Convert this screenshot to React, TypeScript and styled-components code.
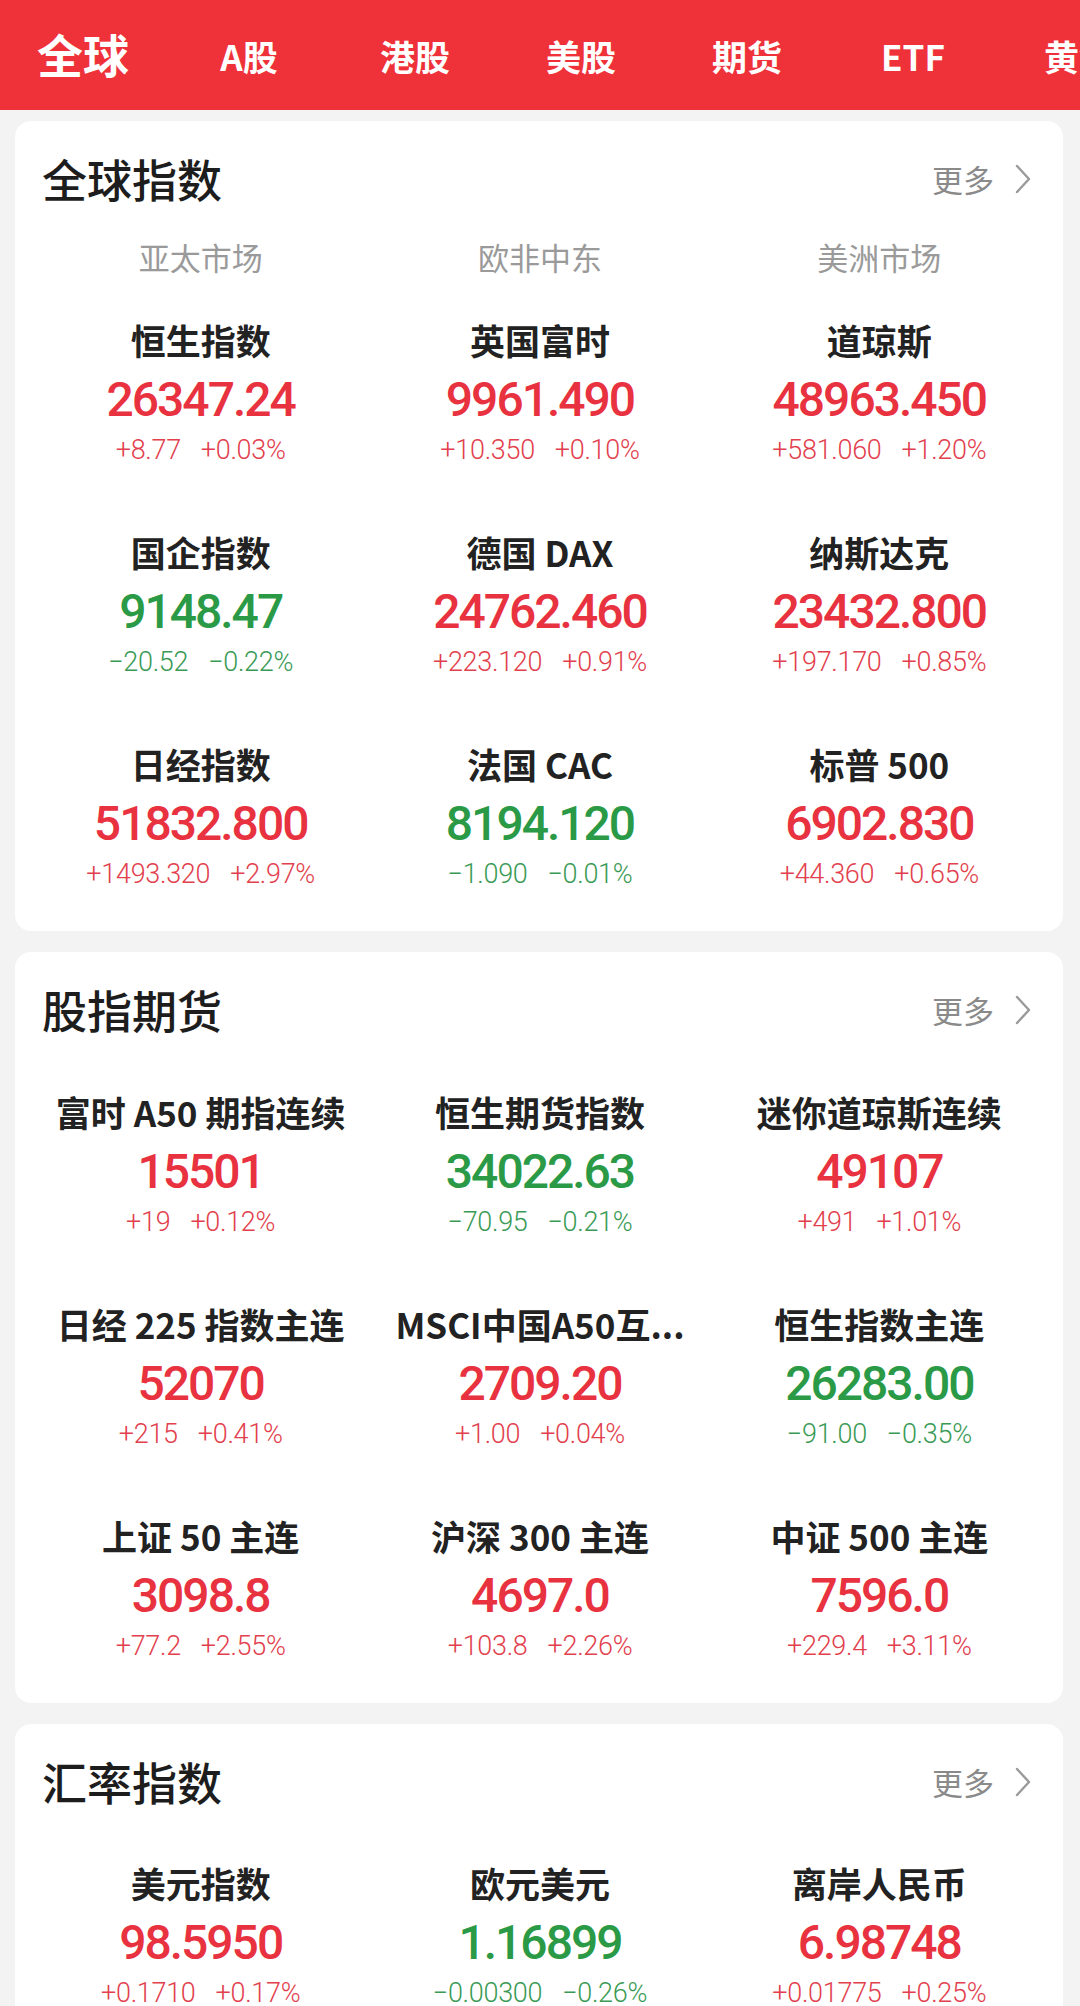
import React from "react";
import styled, { createGlobalStyle } from "styled-components";

type Dir = "up" | "down";

type Quote = {
  name: string;
  price: string;
  delta: string;
  pct: string;
  dir: Dir;
};

type Section = {
  title: string;
  regions?: string[];
  gridTop: number;
  quotes: Quote[];
};

const RED = "#e8323f";
const GREEN = "#2b9a47";

const GlobalStyle = createGlobalStyle`
  html, body {
    margin: 0;
    padding: 0;
    background: #f3f3f3;
    font-family: "Noto Sans CJK SC", "Noto Sans", sans-serif;
  }
`;

const Page = styled.div`
  width: 1080px;
  height: 2006px;
  overflow: hidden;
  background: #f3f3f3;
`;

const TopBar = styled.div`
  height: 110px;
  display: flex;
  align-items: center;
  background: #ef313a;
  overflow: hidden;
`;

const Tab = styled.div<{ $active?: boolean }>`
  flex: 0 0 166px;
  text-align: center;
  color: #fff;
  white-space: nowrap;
  font-size: ${(p) => (p.$active ? 46 : 35)}px;
  font-weight: 700;
  line-height: 50px;
  margin-top: ${(p) => (p.$active ? -4 : 2)}px;
`;

const Feed = styled.div`
  display: flex;
  flex-direction: column;
  gap: 21px;
  padding: 11px 17px 0 15px;
`;

const Card = styled.div`
  background: #fff;
  border-radius: 16px;
  padding: 0 14px 39px 16px;
`;

const CardHeader = styled.div`
  display: flex;
  align-items: center;
  justify-content: space-between;
  height: 44px;
  padding: 36px 17px 0 11px;
`;

const Title = styled.div`
  font-size: 45px;
  font-weight: 500;
  color: #1d1d1d;
  line-height: 44px;
`;

const More = styled.div`
  display: flex;
  align-items: center;
  gap: 20px;
  font-size: 31px;
  color: #8a8a8a;
  line-height: 44px;
`;

const Regions = styled.div`
  display: grid;
  grid-template-columns: repeat(3, 1fr);
  margin-top: 36px;
  line-height: 40px;
  font-size: 31px;
  color: #9a9a9a;
  text-align: center;
`;

const Grid = styled.div<{ $top: number }>`
  display: grid;
  grid-template-columns: repeat(3, 1fr);
  row-gap: 62px;
  margin-top: ${(p) => p.$top}px;
`;

const Cell = styled.div`
  display: flex;
  flex-direction: column;
  align-items: center;
  min-width: 0;
`;

const Name = styled.div`
  font-size: 35px;
  font-weight: 700;
  line-height: 44px;
  color: #222;
  white-space: nowrap;
`;

const Price = styled.div<{ $dir: Dir }>`
  margin-top: 10px;
  font-family: Roboto, "Liberation Sans", sans-serif;
  font-size: 48px;
  font-weight: 500;
  line-height: 56px;
  letter-spacing: -2px;
  color: ${(p) => (p.$dir === "up" ? RED : GREEN)};
`;

const Change = styled.div<{ $dir: Dir }>`
  display: flex;
  gap: 20px;
  margin-top: 4px;
  font-family: Roboto, "Liberation Sans", sans-serif;
  font-size: 27px;
  font-weight: 300;
  line-height: 36px;
  letter-spacing: -0.3px;
  color: ${(p) => (p.$dir === "up" ? "#e2404d" : "#3a9a55")};
`;

const tabs = ["全球", "A股", "港股", "美股", "期货", "ETF", "黄金"];

const sections: Section[] = [
  {
    title: "全球指数",
    regions: ["亚太市场", "欧非中东", "美洲市场"],
    gridTop: 41,
    quotes: [
      { name: "恒生指数", price: "26347.24", delta: "+8.77", pct: "+0.03%", dir: "up" },
      { name: "英国富时", price: "9961.490", delta: "+10.350", pct: "+0.10%", dir: "up" },
      { name: "道琼斯", price: "48963.450", delta: "+581.060", pct: "+1.20%", dir: "up" },
      { name: "国企指数", price: "9148.47", delta: "−20.52", pct: "−0.22%", dir: "down" },
      { name: "德国 DAX", price: "24762.460", delta: "+223.120", pct: "+0.91%", dir: "up" },
      { name: "纳斯达克", price: "23432.800", delta: "+197.170", pct: "+0.85%", dir: "up" },
      { name: "日经指数", price: "51832.800", delta: "+1493.320", pct: "+2.97%", dir: "up" },
      { name: "法国 CAC", price: "8194.120", delta: "−1.090", pct: "−0.01%", dir: "down" },
      { name: "标普 500", price: "6902.830", delta: "+44.360", pct: "+0.65%", dir: "up" },
    ],
  },
  {
    title: "股指期货",
    gridTop: 58,
    quotes: [
      { name: "富时 A50 期指连续", price: "15501", delta: "+19", pct: "+0.12%", dir: "up" },
      { name: "恒生期货指数", price: "34022.63", delta: "−70.95", pct: "−0.21%", dir: "down" },
      { name: "迷你道琼斯连续", price: "49107", delta: "+491", pct: "+1.01%", dir: "up" },
      { name: "日经 225 指数主连", price: "52070", delta: "+215", pct: "+0.41%", dir: "up" },
      { name: "MSCI中国A50互...", price: "2709.20", delta: "+1.00", pct: "+0.04%", dir: "up" },
      { name: "恒生指数主连", price: "26283.00", delta: "−91.00", pct: "−0.35%", dir: "down" },
      { name: "上证 50 主连", price: "3098.8", delta: "+77.2", pct: "+2.55%", dir: "up" },
      { name: "沪深 300 主连", price: "4697.0", delta: "+103.8", pct: "+2.26%", dir: "up" },
      { name: "中证 500 主连", price: "7596.0", delta: "+229.4", pct: "+3.11%", dir: "up" },
    ],
  },
  {
    title: "汇率指数",
    gridTop: 57,
    quotes: [
      { name: "美元指数", price: "98.5950", delta: "+0.1710", pct: "+0.17%", dir: "up" },
      { name: "欧元美元", price: "1.16899", delta: "−0.00300", pct: "−0.26%", dir: "down" },
      { name: "离岸人民币", price: "6.98748", delta: "+0.01775", pct: "+0.25%", dir: "up" },
    ],
  },
];

const Chevron = () => (
  <svg width="18" height="30" viewBox="0 0 18 30" fill="none">
    <path d="M3 2 L15 15 L3 28" stroke="#9a9a9a" strokeWidth="2.4" strokeLinecap="round" strokeLinejoin="round" />
  </svg>
);

function QuoteCell({ q }: { q: Quote }) {
  return (
    <Cell>
      <Name>{q.name}</Name>
      <Price $dir={q.dir}>{q.price}</Price>
      <Change $dir={q.dir}>
        <span>{q.delta}</span>
        <span>{q.pct}</span>
      </Change>
    </Cell>
  );
}

function MarketCard({ section }: { section: Section }) {
  return (
    <Card>
      <CardHeader>
        <Title>{section.title}</Title>
        <More>
          更多
          <Chevron />
        </More>
      </CardHeader>
      {section.regions && (
        <Regions>
          {section.regions.map((r) => (
            <div key={r}>{r}</div>
          ))}
        </Regions>
      )}
      <Grid $top={section.gridTop}>
        {section.quotes.map((q) => (
          <QuoteCell key={q.name} q={q} />
        ))}
      </Grid>
    </Card>
  );
}

export default function App() {
  return (
    <Page>
      <GlobalStyle />
      <TopBar>
        {tabs.map((t, i) => (
          <Tab key={t} $active={i === 0}>
            {t}
          </Tab>
        ))}
      </TopBar>
      <Feed>
        {sections.map((s) => (
          <MarketCard key={s.title} section={s} />
        ))}
      </Feed>
    </Page>
  );
}
